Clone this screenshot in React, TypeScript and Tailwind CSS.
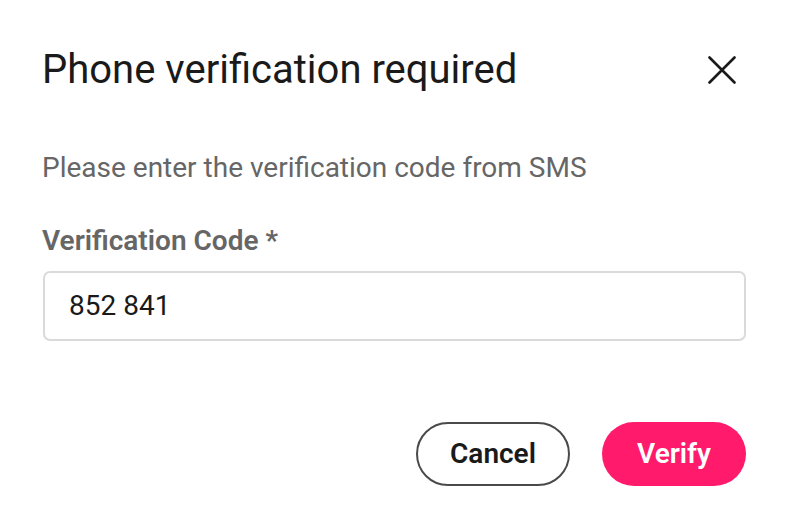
export default function App() {
  return (
    <div
      className="w-[788px] h-[528px] bg-white px-[42px] pt-[46px]"
      style={{ fontFamily: "Roboto, 'Noto Sans', sans-serif" }}
    >
      <div className="flex items-center justify-between">
        <h1 className="text-[40px] leading-[48px] text-[#1a1a1a]">Phone verification required</h1>
        <button className="mr-[10px] text-[#1a1a1a]">
          <svg width="28" height="28" viewBox="0 0 28 28" fill="none" stroke="currentColor" strokeWidth="2.6" strokeLinecap="round">
            <path d="M1.5 1.5 L26.5 26.5 M26.5 1.5 L1.5 26.5" />
          </svg>
        </button>
      </div>

      <p className="mt-[56px] text-[28px] leading-[36px] text-[#666666]">
        Please enter the verification code from SMS
      </p>

      <label className="block mt-[37px] text-[28px] leading-[36px] font-semibold text-[#666666]">
        Verification Code *
      </label>
      <div className="mt-[12px] ml-px h-[70px] rounded-[7px] border-2 border-[#dadada] flex items-center px-[24px]">
        <span className="text-[28px] leading-[36px] text-[#1a1a1a]">852 841</span>
      </div>

      <div className="mt-[81px] flex justify-end gap-[32px]">
        <button className="h-[64px] w-[154px] rounded-full border-2 border-[#4a4a4a] text-[28px] font-semibold text-[#1a1a1a]">
          Cancel
        </button>
        <button className="h-[64px] w-[144px] rounded-full bg-[#ff1a6c] text-[28px] font-semibold text-white">
          Verify
        </button>
      </div>
    </div>
  );
}
